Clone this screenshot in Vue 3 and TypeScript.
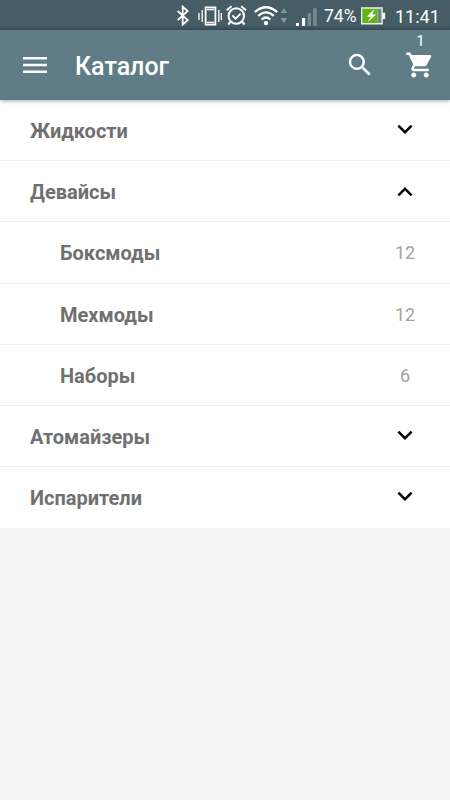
<script setup lang="ts">
import { computed, ref } from 'vue'

interface Child { title: string; count: number }
interface Category { title: string; children: Child[] }
interface Row { title: string; level: number; count?: number; open?: boolean }

const categories: Category[] = [
  { title: 'Жидкости', children: [] },
  {
    title: 'Девайсы',
    children: [
      { title: 'Боксмоды', count: 12 },
      { title: 'Мехмоды', count: 12 },
      { title: 'Наборы', count: 6 },
    ],
  },
  { title: 'Атомайзеры', children: [] },
  { title: 'Испарители', children: [] },
]

const opened = ref('Девайсы')
const rows = computed<Row[]>(() =>
  categories.flatMap((c) => {
    const open = c.title === opened.value
    const head: Row = { title: c.title, level: 0, open }
    return open ? [head, ...c.children.map((s) => ({ ...s, level: 1 }))] : [head]
  }),
)

function toggle(row: Row) {
  if (row.level === 0) opened.value = row.open ? '' : row.title
}
</script>

<template>
  <div class="screen">
    <div class="status">
      <svg class="indicators" width="145" height="30" viewBox="175 0 145 30" fill="none" stroke="#fff">
        <path d="M177.7 11l10 9.2-5 4.3V6.7l5 4.3-10 9.2" stroke-width="1.8" />
        <path d="M205.6 7.4h9.8v17.2h-9.8z" stroke-width="1.8" />
        <path d="M207 9.5h7M207 22.5h7" stroke-width="1.5" />
        <path d="M202.2 10v12M199 13v7M218.8 10v12M221.3 13v7" stroke-width="1.3" />
        <circle cx="236.3" cy="16" r="7.7" stroke-width="2" />
        <path d="M226.7 10.3l4.8-4M246 10.3l-4.8-4M230.7 21.5l-2.5 3M242 21.5l2.5 3" stroke-width="2" />
        <path d="M232.3 15.5l3.3 3.2 5-5" stroke-width="1.8" />
        <path d="M254.8 12.2q11.2-10 22.4 0M258.2 15.9q7.8-7 15.6 0M261.6 19.5q4.4-4 8.8 0" stroke-width="2.3" />
        <circle cx="266" cy="23.1" r="2.2" fill="#fff" stroke="none" />
        <path d="M280.7 13l3.2-5 3.2 5zM280.7 18l3.2 5.3 3.2-5.3z" fill="#83959a" stroke="none" />
        <path d="M296 23h3v3h-3zM302 18h3.2v8H302z" fill="#fff" stroke="none" />
        <path d="M307.6 13.3h3.4V26h-3.4zM313.2 8.3h3.5V26h-3.5z" fill="#778a91" stroke="none" />
      </svg>
      <span class="percent">74%</span>
      <svg class="battery" width="25" height="30" viewBox="361 0 25 30">
        <path d="M361 7.3h21.8v5.4h2.4v6.2h-2.4v5.5H361z" fill="#edf5ee" />
        <path d="M362.3 8.7h15.2V23h-15.2z" fill="#62b516" />
        <path d="M377.5 8.7h4V23h-4z" fill="#71878a" />
        <path d="M374.2 9.2l-7.4 7.5h4l-3 5.4 8.4-7.6h-4z" fill="#fff" />
      </svg>
      <span class="time">11:41</span>
    </div>

    <header class="bar">
      <button class="icon menu" aria-label="Меню">
        <svg width="24" height="18" viewBox="0 0 24 18" fill="none" stroke="#fff" stroke-width="2.5">
          <path d="M0 2.2h24M0 9h24M0 15.8h24" />
        </svg>
      </button>
      <h1>Каталог</h1>
      <button class="icon search" aria-label="Поиск">
        <svg width="30" height="30" viewBox="0 0 24 24" fill="#fff">
          <path d="M15.5 14h-.79l-.28-.27A6.47 6.47 0 0 0 16 9.5 6.5 6.5 0 1 0 9.5 16c1.61 0 3.09-.59 4.23-1.57l.27.28v.79l5 4.99L20.49 19l-4.99-5zm-6 0C7.01 14 5 11.99 5 9.5S7.01 5 9.5 5 14 7.01 14 9.5 11.99 14 9.5 14z" />
        </svg>
      </button>
      <button class="icon cart" aria-label="Корзина">
        <svg width="30" height="30" viewBox="0 0 24 24" fill="#fff">
          <path d="M7 18c-1.1 0-1.99.9-1.99 2S5.9 22 7 22s2-.9 2-2-.9-2-2-2zM1 2v2h2l3.6 7.59-1.35 2.45c-.16.28-.25.61-.25.96 0 1.1.9 2 2 2h12v-2H7.42c-.14 0-.25-.11-.25-.25l.03-.12.9-1.63h7.45c.75 0 1.41-.41 1.75-1.03l3.58-6.49A1 1 0 0 0 20 4H5.21l-.94-2H1zm16 16c-1.1 0-1.99.9-1.99 2s.89 2 1.99 2 2-.9 2-2-.9-2-2-2z" />
        </svg>
        <span class="badge">1</span>
      </button>
    </header>

    <ul class="list">
      <li v-for="row in rows" :key="row.title" class="row" :class="{ child: row.level === 1 }" @click="toggle(row)">
        <span class="title">{{ row.title }}</span>
        <span v-if="row.level === 1" class="count">{{ row.count }}</span>
        <svg v-else class="chevron" :class="{ up: row.open }" width="30" height="30" viewBox="0 0 24 24">
          <path d="M7.41 7.84L12 12.42l4.59-4.58L18 9.25l-6 6-6-6z" />
        </svg>
      </li>
    </ul>
  </div>
</template>

<style>
body {
  margin: 0;
  background: #f4f4f4;
}
</style>

<style scoped>
.screen {
  height: 800px;
  overflow: hidden;
  background: #f4f4f4;
  font-family: Roboto, "Noto Sans", sans-serif;
}
.status {
  box-sizing: border-box;
  height: 30px;
  padding-left: 175px;
  display: flex;
  background: linear-gradient(#465d66 0, #465d66 24px, #3b5059 30px);
  color: #fff;
  line-height: 33px;
  white-space: nowrap;
}
.status svg {
  display: block;
  flex: none;
}
.percent {
  width: 37px;
  margin-left: 4px;
  font-size: 17.5px;
}
.time {
  margin-left: 9px;
  font-size: 18px;
}
.bar {
  position: relative;
  z-index: 1;
  box-sizing: border-box;
  height: 70px;
  padding: 0 15px 0 23px;
  display: flex;
  align-items: center;
  background: #607d87;
  box-shadow: 0 1px 4px rgba(0, 0, 0, 0.35);
  color: #fff;
}
.icon {
  position: relative;
  flex: none;
  padding: 0;
  border: 0;
  background: none;
  color: inherit;
  font: inherit;
}
.icon svg {
  display: block;
}
h1 {
  flex: 1;
  margin: 4px 0 0 28px;
  font-size: 25px;
  font-weight: 500;
  line-height: 30px;
}
.search {
  margin-right: 30px;
}
.badge {
  position: absolute;
  top: -18px;
  left: 0;
  width: 31px;
  font-size: 15px;
  line-height: 18px;
  text-align: center;
}
.list {
  margin: 0;
  padding: 0;
  list-style: none;
}
.row {
  box-sizing: border-box;
  height: 61.2px;
  padding: 0 30px;
  display: flex;
  align-items: center;
  justify-content: space-between;
  border-bottom: 1px solid #f0f0f0;
  background: #fff;
}
.row:last-child {
  border-bottom-color: #fff;
}
.child {
  padding-left: 60px;
}
.title {
  padding-top: 2px;
  color: #707070;
  font-size: 20px;
  font-weight: 700;
}
.count {
  width: 30px;
  padding-top: 1px;
  color: #a3a3a3;
  font-size: 18px;
  text-align: center;
}
.chevron {
  display: block;
}
.chevron.up {
  transform: rotate(180deg);
}
</style>
